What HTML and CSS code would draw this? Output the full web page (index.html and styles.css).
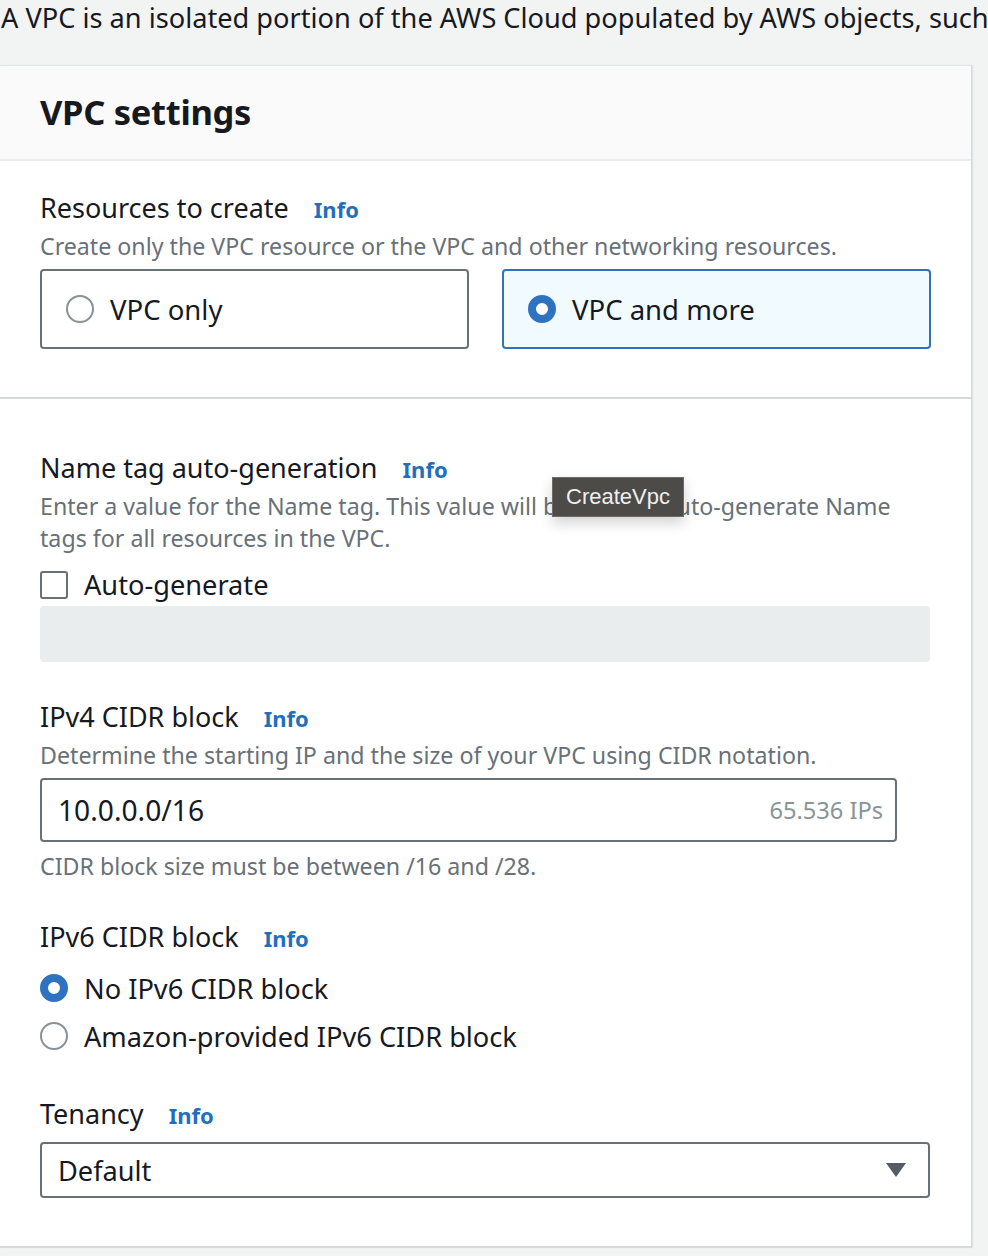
FILE: index.html
```html
<!DOCTYPE html>
<html lang="en">
<head>
<meta charset="utf-8">
<title>VPC settings</title>
<link rel="stylesheet" href="styles.css">
</head>
<body>
<p class="intro">A VPC is an isolated portion of the AWS Cloud populated by AWS objects, such as Amazon EC2 instances.</p>
<div class="card">
  <div class="card-header"><h2>VPC settings</h2></div>

  <section class="section first">
    <div class="label">Resources to create <a class="info">Info</a></div>
    <div class="desc">Create only the VPC resource or the VPC and other networking resources.</div>
    <div class="tiles">
      <div class="tile"><span class="radio"></span><span>VPC only</span></div>
      <div class="tile selected"><span class="radio checked"></span><span>VPC and more</span></div>
    </div>
  </section>

  <section class="section">
    <div class="field">
      <div class="label">Name tag auto-generation <a class="info">Info</a></div>
      <div class="desc wrap">Enter a value for the Name tag. This value will be used to auto-generate Name tags for all resources in the VPC.
        <span class="tooltip">CreateVpc</span>
      </div>
      <div class="check-row"><span class="checkbox"></span><span>Auto-generate</span></div>
      <div class="input disabled"></div>
    </div>

    <div class="field">
      <div class="label">IPv4 CIDR block <a class="info">Info</a></div>
      <div class="desc">Determine the starting IP and the size of your VPC using CIDR notation.</div>
      <div class="input cidr"><span>10.0.0.0/16</span><span class="hint">65.536 IPs</span></div>
      <div class="desc constraint">CIDR block size must be between /16 and /28.</div>
    </div>

    <div class="field">
      <div class="label">IPv6 CIDR block <a class="info">Info</a></div>
      <div class="radio-group">
        <div class="radio-row"><span class="radio checked"></span><span>No IPv6 CIDR block</span></div>
        <div class="radio-row"><span class="radio"></span><span>Amazon-provided IPv6 CIDR block</span></div>
      </div>
    </div>

    <div class="field last">
      <div class="label">Tenancy <a class="info">Info</a></div>
      <div class="input select"><span>Default</span>
        <svg class="caret" width="20" height="14" viewBox="0 0 20 14"><path d="M0 0 H20 L10 14 Z" fill="#545b64"/></svg>
      </div>
    </div>
  </section>
</div>
</body>
</html>
```
FILE: styles.css
```css
* { box-sizing: border-box; }
html, body { margin: 0; padding: 0; }
body {
  background: #f2f3f3;
  font-family: "Noto Sans", "Open Sans", "DejaVu Sans", sans-serif;
  color: #16191f;
  overflow: hidden;
  width: 988px;
  height: 1256px;
}
.intro {
  margin: 0;
  font-size: 27.2px;
  line-height: 36px;
  white-space: nowrap;
  padding-left: 1px;
}
.card {
  margin-top: 29px;
  width: 971px;
  background: #fff;
  border-top: 1px solid #e4e7e7;
  box-shadow: 1px 0 0 #d5d9dc, 2px 0 1px #dfe2e4;
}
.card-header {
  background: #fafafa;
  border-bottom: 2px solid #eaeded;
  height: 95px;
  padding: 25px 40px 0;
}
.card-header h2 {
  margin: 0;
  font-size: 34.5px;
  line-height: 42px;
  font-weight: 700;
  letter-spacing: -0.3px;
}
.section {
  padding: 51px 40px 48px;
  border-bottom: 2px solid #d5dbdb;
}
.section.first { padding-top: 29px; }
.label {
  font-size: 27px;
  line-height: 36px;
}
.info {
  color: #1f6fbd;
  font-weight: 700;
  font-size: 22px;
  margin-left: 18px;
  text-decoration: none;
}
.desc {
  color: #687078;
  font-size: 23.2px;
  line-height: 32px;
  margin-top: 3px;
  position: relative;
}
.desc.wrap { width: 870px; }
.tiles {
  display: flex;
  gap: 33px;
  margin-top: 7px;
}
.tile {
  width: 430px;
  height: 80px;
  border: 2px solid #687078;
  border-radius: 4px;
  display: flex;
  align-items: center;
  padding-left: 24px;
  gap: 16px;
  font-size: 27.5px;
}
.tile.selected {
  border-color: #2e73bf;
  background: #f1faff;
}
.radio {
  width: 28px;
  height: 28px;
  border-radius: 50%;
  border: 2px solid #879196;
  background: #fff;
  flex: none;
}
.radio.checked {
  border: 8px solid #2e73bf;
}
.field { margin-bottom: 37px; }
.field.last { margin-bottom: 0; }
.check-row {
  display: flex;
  align-items: center;
  gap: 16px;
  font-size: 27.2px;
  line-height: 32px;
  margin-top: 15px;
}
.checkbox {
  width: 28px;
  height: 28px;
  border: 2px solid #687078;
  border-radius: 3px;
  background: #fff;
}
.input {
  border: 2px solid #687078;
  border-radius: 4px;
  background: #fff;
  display: flex;
  align-items: center;
  font-size: 27.2px;
  padding: 0 12px 0 16px;
}
.input.disabled {
  margin-top: 5px;
  height: 56px;
  width: 890px;
  border-color: #eaeded;
  background: #eaeded;
}
.input.cidr {
  margin-top: 7px;
  height: 64px;
  width: 857px;
  justify-content: space-between;
  font-size: 28.2px;
}
.hint {
  color: #879596;
  font-size: 23.6px;
}
.constraint { margin-top: 8px; }
.radio-group { margin-top: 8px; }
.radio-row {
  display: flex;
  align-items: center;
  gap: 16px;
  font-size: 27.2px;
  height: 48px;
}
.field.last .label { margin-top: -1px; }
.input.select {
  margin-top: 9px;
  height: 56px;
  width: 890px;
  justify-content: space-between;
  padding-right: 22px;
}
.tooltip {
  position: absolute;
  left: 512px;
  top: -13px;
  width: 132px;
  height: 40px;
  background: #4c4b48;
  border: 1px solid #6c6b68;
  color: #f0f0f0;
  font-family: "Liberation Sans", Arial, sans-serif;
  font-size: 22px;
  line-height: 38px;
  text-align: center;
  box-shadow: 0 6px 14px rgba(0,0,0,0.18);
}
```
